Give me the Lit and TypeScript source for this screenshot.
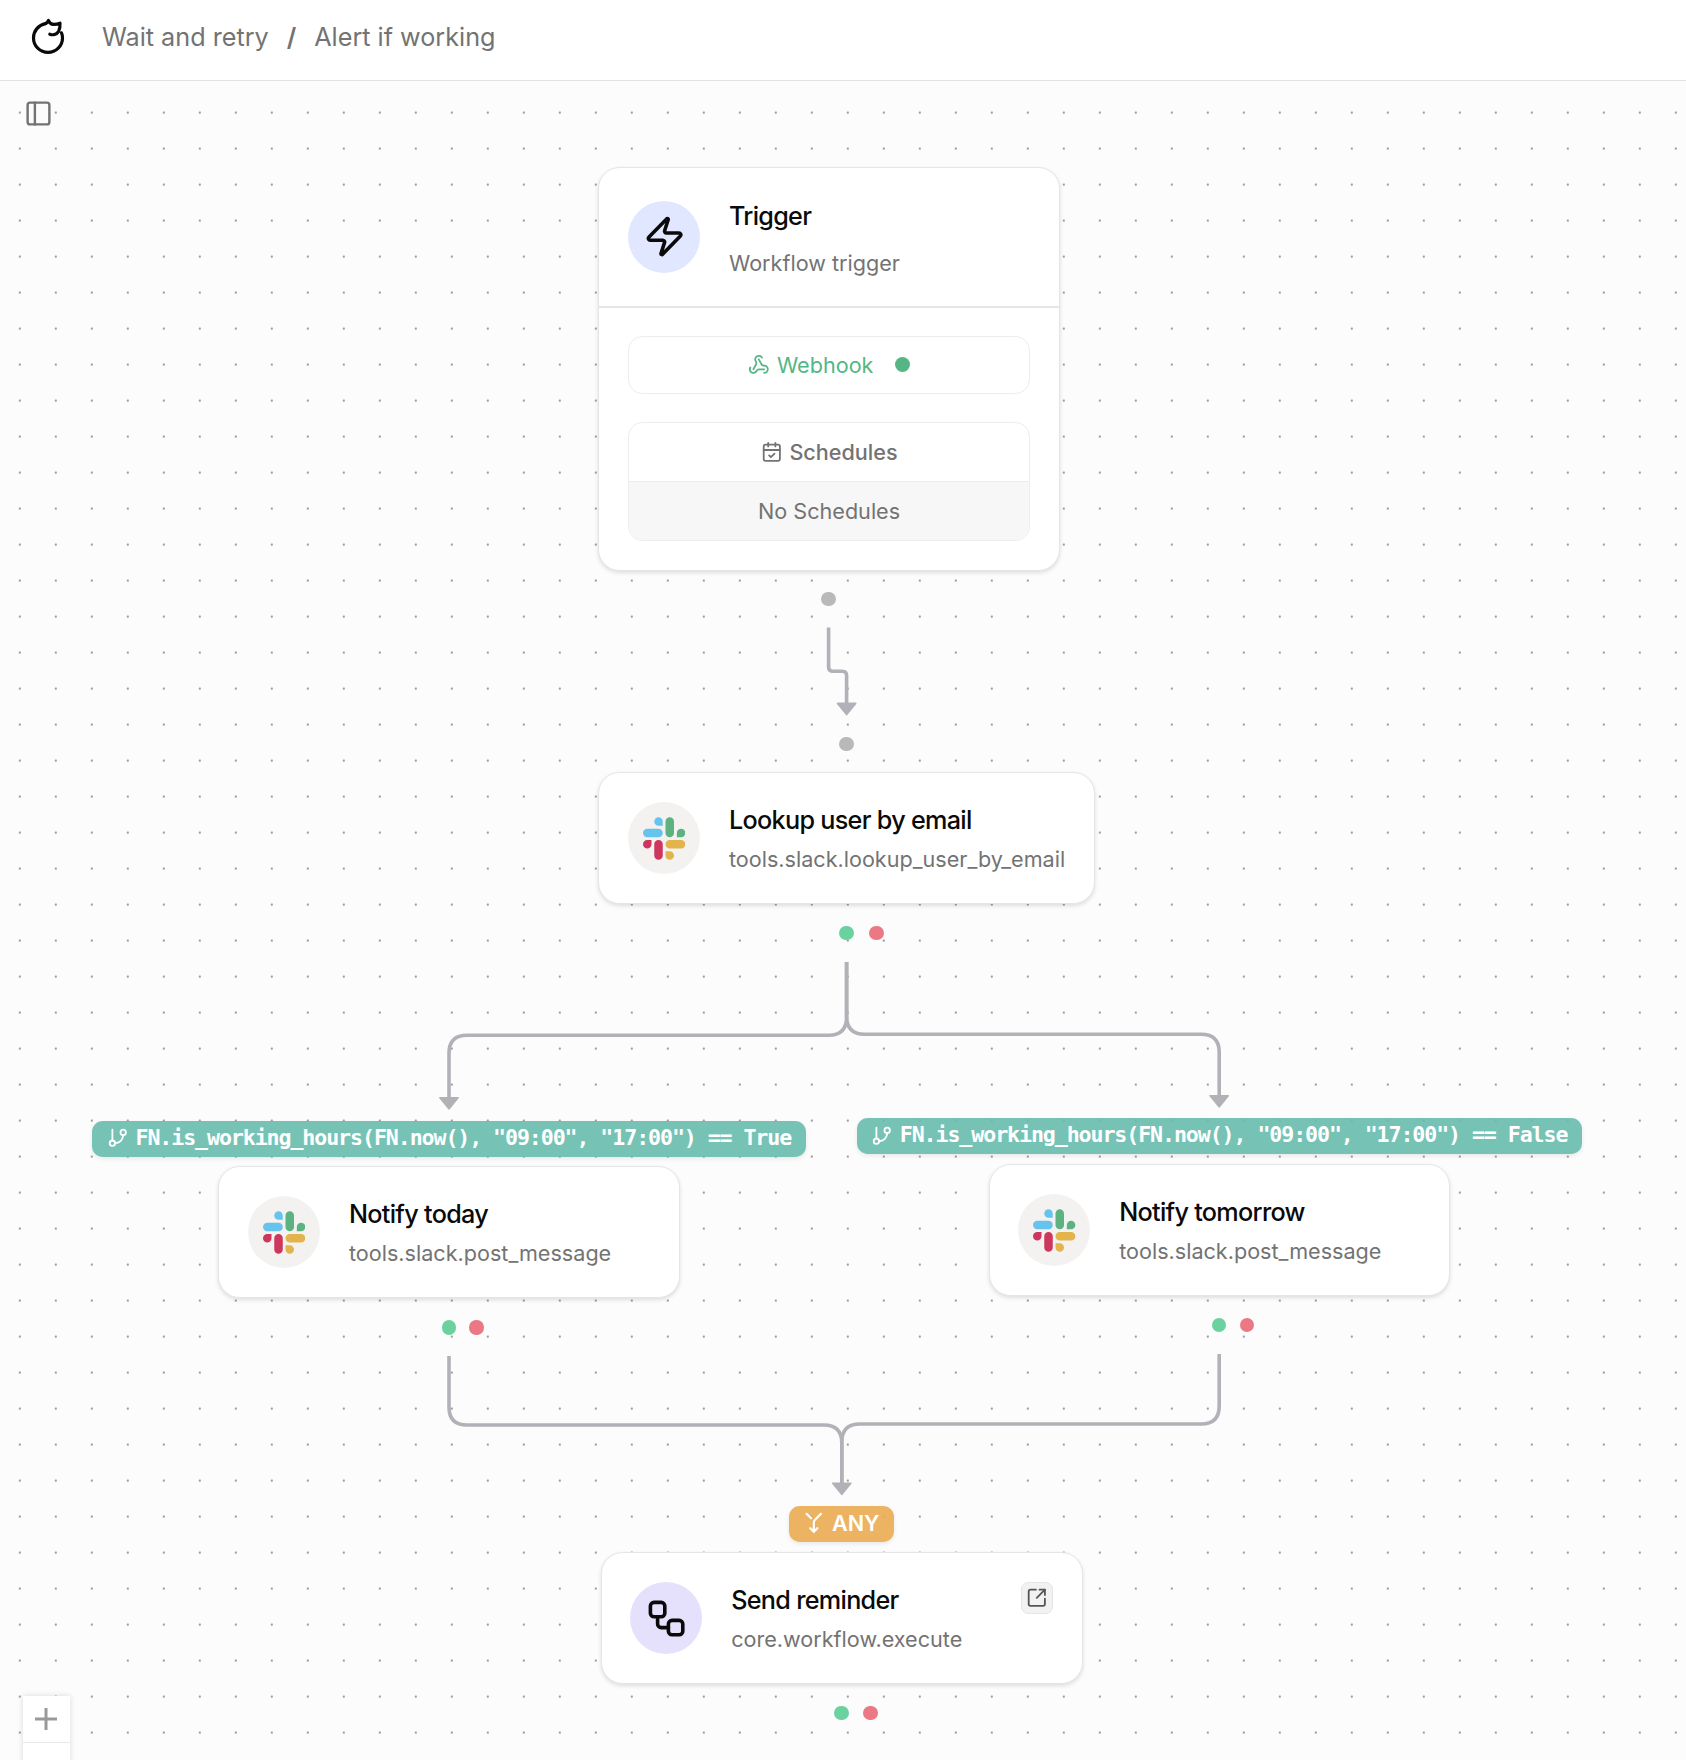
import { LitElement, html, css, svg } from "lit";
import { customElement } from "lit/decorators.js";
import { styleMap } from "lit/directives/style-map.js";

const lucide = (body: unknown, cls: string, sw = 2) => html`<svg class="ic ${cls}" viewBox="0 0 24 24" fill="none" stroke="currentColor" stroke-width=${sw} stroke-linecap="round" stroke-linejoin="round">${body}</svg>`;

const zap = svg`<path d="M4 14a1 1 0 0 1-.78-1.63l9.9-10.2a.5.5 0 0 1 .86.46l-1.92 6.02A1 1 0 0 0 13 10h7a1 1 0 0 1 .78 1.63l-9.9 10.2a.5.5 0 0 1-.86-.46l1.92-6.02A1 1 0 0 0 11 14z"/>`;
const workflow = svg`<rect width="8" height="8" x="3" y="3" rx="2"/><path d="M7 11v4a2 2 0 0 0 2 2h4"/><rect width="8" height="8" x="13" y="13" rx="2"/>`;
const webhook = svg`<path d="M18 16.98h-5.99c-1.1 0-1.95.94-2.48 1.9A4 4 0 0 1 2 17c.01-.7.2-1.4.57-2"/><path d="m6 17 3.13-5.78c.53-.97.1-2.18-.5-3.1a4 4 0 1 1 6.89-4.06"/><path d="m12 6 3.13 5.73C15.66 12.7 16.9 13 18 13a4 4 0 0 1 0 8"/>`;
const calendar = svg`<path d="M8 2v4"/><path d="M16 2v4"/><rect width="18" height="18" x="3" y="4" rx="2"/><path d="M3 10h18"/><path d="m9 16 2 2 4-4"/>`;
const branch = svg`<path d="M6 3v12"/><circle cx="18" cy="6" r="3"/><circle cx="6" cy="18" r="3"/><path d="M18 9a9 9 0 0 1-9 9"/>`;
const merge = svg`<g transform="rotate(180 12 12)"><path d="m8 6 4-4 4 4"/><path d="M12 2v10.3a4 4 0 0 1-1.172 2.872L4 22"/><path d="m20 22-5-5"/></g>`;
const panel = svg`<rect width="18" height="18" x="3" y="3" rx="2"/><path d="M9 3v18"/>`;
const openOut = svg`<path d="M11 3H5a2 2 0 0 0-2 2v14a2 2 0 0 0 2 2h14a2 2 0 0 0 2-2v-6"/><path d="M15 3h6v6"/><path d="M21 3 12 12"/>`;

const slack = html`<svg class="slack" viewBox="0 0 54 54">
<path fill="#66c3ec" d="M19.7.1a5.4 5.4 0 1 0 0 10.8h5.4V5.5A5.4 5.4 0 0 0 19.7.1m0 14.4H5.4a5.4 5.4 0 1 0 0 10.8h14.3a5.4 5.4 0 1 0 0-10.8"/>
<path fill="#5cb381" d="M53.8 19.9a5.4 5.4 0 1 0-10.8 0v5.4h5.4a5.4 5.4 0 0 0 5.4-5.4m-14.4 0V5.5a5.4 5.4 0 1 0-10.8 0v14.4a5.4 5.4 0 1 0 10.8 0"/>
<path fill="#e3b34c" d="M34 54a5.4 5.4 0 1 0 0-10.8h-5.4v5.4A5.4 5.4 0 0 0 34 54m0-14.4h14.4a5.4 5.4 0 1 0 0-10.8H34a5.4 5.4 0 1 0 0 10.8"/>
<path fill="#cd375d" d="M0 34.2a5.4 5.4 0 1 0 10.8 0v-5.4H5.4A5.4 5.4 0 0 0 0 34.2m14.3 0v14.4a5.4 5.4 0 1 0 10.8 0V34.2a5.4 5.4 0 1 0-10.8 0"/>
</svg>`;

interface Dot { x: number; y: number; kind: "idle" | "ok" | "err" }
interface Action { x: number; y: number; w: number; title: string; sub: string; icon: "slack" | "workflow" }

const dots: Dot[] = [
  { x: 828.5, y: 598.7, kind: "idle" }, { x: 846.5, y: 744, kind: "idle" },
  { x: 846.5, y: 933, kind: "ok" }, { x: 876.5, y: 933, kind: "err" },
  { x: 448.8, y: 1327.3, kind: "ok" }, { x: 476.6, y: 1327.3, kind: "err" },
  { x: 1219, y: 1325.2, kind: "ok" }, { x: 1246.9, y: 1325.2, kind: "err" },
  { x: 841.5, y: 1712.8, kind: "ok" }, { x: 870.5, y: 1712.8, kind: "err" },
];
const actions: Action[] = [
  { x: 598.4, y: 772, w: 496.2, title: "Lookup user by email", sub: "tools.slack.lookup_user_by_email", icon: "slack" },
  { x: 218.4, y: 1166, w: 461.4, title: "Notify today", sub: "tools.slack.post_message", icon: "slack" },
  { x: 988.6, y: 1164, w: 461.4, title: "Notify tomorrow", sub: "tools.slack.post_message", icon: "slack" },
  { x: 600.6, y: 1552, w: 482, title: "Send reminder", sub: "core.workflow.execute", icon: "workflow" },
];
const conditions = [
  { x: 92.3, y: 1120.6, text: 'FN.is_working_hours(FN.now(), "09:00", "17:00") == True' },
  { x: 856.6, y: 1118.4, text: 'FN.is_working_hours(FN.now(), "09:00", "17:00") == False' },
];
const edges = [
  "M828.6 627.5V667Q828.6 671.2 833 671.2H842.2Q846.6 671.2 846.6 675.6V704",
  "M846.6 962V1017.2Q846.6 1035.2 828.6 1035.2H467Q449 1035.2 449 1053.2V1098",
  "M846.6 962V1016.2Q846.6 1034.2 864.6 1034.2H1201.2Q1219.2 1034.2 1219.2 1052.2V1096",
  "M449 1356V1407Q449 1425 467 1425H823.8Q841.8 1425 841.8 1443V1484",
  "M1219.2 1354V1406Q1219.2 1424 1201.2 1424H859.8Q841.8 1424 841.8 1442V1484",
];
const arrows = [[846.6, 715.7], [449, 1110], [1219.2, 1108], [841.8, 1495.5]];

const at = (x: number, y: number, w?: number) => styleMap({ left: `${x}px`, top: `${y}px`, ...(w ? { width: `${w}px` } : {}) });

@customElement("app-root")
export class AppRoot extends LitElement {
  static styles = css`
    :host { display: block; }
    * { box-sizing: border-box; }
    .page { width: 1686px; height: 1760px; display: flex; flex-direction: column; overflow: hidden; background: #fcfcfc; font-family: Inter, "Liberation Sans", sans-serif; color: #0a0a0a; }
    .ic { display: block; flex: none; }
    .top { flex: none; height: 81px; background: #fff; border-bottom: 1px solid #e2e2e2; display: flex; align-items: center; padding: 0 0 6px 30px; }
    .logo { width: 36px; height: 40px; flex: none; }
    .crumbs { display: flex; align-items: center; margin-left: 36px; gap: 18px; font-size: 25.2px; line-height: 36px; color: #737373; white-space: nowrap; }
    .slash { font-weight: 600; }
    .canvas { flex: 1; position: relative; overflow: hidden; background-image: radial-gradient(circle at 1px 1px, #9c9c9c 0, #9c9c9c .7px, transparent 1.5px); background-size: 36px 36px; background-position: 18.8px 30.6px; }
    .layer { position: absolute; left: 0; top: -81px; width: 1686px; height: 1760px; }
    .edges { position: absolute; left: 0; top: 0; }
    .panel { position: absolute; left: 24px; top: 98.500px; width: 29px; height: 29px; color: #737373; }
    .card { position: absolute; background: #fff; border: 1px solid #e5e5e5; border-radius: 21.6px; box-shadow: 0 2px 4px rgba(0,0,0,.12); }
    .head { display: flex; gap: 28.8px; padding: 29.2px 28.8px 28.8px; align-items: flex-start; height: 130px; }
    .head.tall { height: 137.5px; padding-top: 33px; }
    .av { width: 72px; height: 72px; border-radius: 50%; flex: none; display: flex; align-items: center; justify-content: center; background: #f3f2f0; }
    .av.blue { background: #e0e7ff; }
    .av.violet { background: #e5e0fb; }
    .i43 { width: 43.2px; height: 43.2px; }
    .slack { width: 42.5px; height: 43px; display: block; }
    .words { display: flex; flex-direction: column; white-space: nowrap; flex: 1; }
    .title { font-size: 25.2px; font-weight: 500; line-height: 36px; letter-spacing: -.7px; }
    .sub { font-size: 21.6px; line-height: 28.8px; margin-top: 6.6px; color: #737373; }
    .tall .title { margin-top: -3.4px; }
    .tall .sub { margin-top: 15.4px; }
    .body { border-top: 2px solid #e5e5e5; padding: 28.8px; display: flex; flex-direction: column; gap: 28.8px; }
    .box { border: 1.8px solid #ededed; border-radius: 14.4px; font-size: 21.6px; color: #737373; overflow: hidden; }
    .line { display: flex; align-items: center; justify-content: center; height: 55.4px; gap: 7.2px; }
    .plan { height: 57.5px; }
    .hook { color: #55b685; }
    .none { background: #f7f7f7; border-top: 1.8px solid #ededed; height: 59px; }
    .medium { font-weight: 500; }
    .i21 { width: 21.6px; height: 21.6px; }
    .live { width: 15px; height: 15px; border-radius: 50%; background: #55b685; margin-left: 14.4px; }
    .dot { position: absolute; width: 14.4px; height: 14.4px; margin: -7.2px 0 0 -7.2px; border-radius: 50%; }
    .idle { background: #b9b9b9; }
    .ok { background: #6bd29f; }
    .err { background: #eb7885; }
    .cond { position: absolute; height: 36px; border-radius: 10.8px; background: rgba(103,189,174,.9); color: #fff; display: flex; align-items: center; gap: 7.2px; padding: 0 15px 1px 14.4px; font: 700 21.6px "DejaVu Sans Mono", monospace; letter-spacing: -1.08px; white-space: pre; box-shadow: 0 2px 4px rgba(0,0,0,.08); }
    .cond span { margin-top: -2px; }
    .any { position: absolute; height: 36px; width: 105.4px; border-radius: 10.8px; background: rgba(234,171,82,.9); color: #fff; display: flex; align-items: center; justify-content: center; gap: 7.2px; padding: 0 1px 1.5px 0; font-size: 21.6px; font-weight: 600; box-shadow: 0 2px 4px rgba(0,0,0,.08); }
    .go { width: 31.4px; height: 31.4px; border-radius: 7.2px; border: 1px solid #e5e5e5; background: #f2f2f2; display: flex; align-items: center; justify-content: center; color: #555; flex: none; }
    .zoom { position: absolute; left: 22.7px; top: 1696px; width: 47.3px; height: 90px; background: #fff; box-shadow: 0 0 6px rgba(0,0,0,.14); }
    .plus { height: 46.8px; border-bottom: 1.4px solid #e8e8e8; display: flex; align-items: center; justify-content: center; color: #999; }
  `;

  private avatar(icon: string) {
    return icon === "slack" ? html`<div class="av">${slack}</div>` : html`<div class="av violet">${lucide(workflow, "i43")}</div>`;
  }

  render() {
    return html`<div class="page">
      <header class="top">
        <svg class="logo" viewBox="0 0 36 40" fill="none" stroke="#0a0a0a" stroke-width="3.2" stroke-linecap="round" stroke-linejoin="round">
          <path d="M15.500 6.600C8.500 7.800 3.500 14 3.500 20.900C3.500 29 10 35.400 18 35.400S32.500 29 32.500 20.900C32.500 18.900 32.200 17.400 31.500 15.800"/>
          <path d="M15.500 6.600C17.300 6 17.900 4.800 18.500 3.400C19.300 5.800 21 7.200 23.500 7.400C26 7.500 28 7 30 6.200C30.200 9 30 12 28.500 14.600C26.600 17.600 23 18.400 19.800 17.200"/>
        </svg>
        <nav class="crumbs"><span>Wait and retry</span><span class="slash">/</span><span>Alert if working</span></nav>
      </header>
      <main class="canvas"><div class="layer">
        <svg class="edges" width="1686" height="1760" fill="none" stroke="#b1b1b7" stroke-width="3.6">
          ${edges.map((d) => svg`<path d=${d}/>`)}
          ${arrows.map(([x, y]) => svg`<path d="M${x - 9} ${y - 12.2}h18l-9 11z" fill="#b1b1b7" stroke-width="1.8" stroke-linejoin="round"/>`)}
        </svg>
        ${lucide(panel, "panel")}
        <section class="card" style=${at(598.4, 167, 461.4)}>
          <div class="head tall"><div class="av blue">${lucide(zap, "i43")}</div>
            <div class="words"><div class="title">Trigger</div><div class="sub">Workflow trigger</div></div></div>
          <div class="body">
            <div class="box"><div class="line hook">${lucide(webhook, "i21")}<span>Webhook</span><i class="live"></i></div></div>
            <div class="box"><div class="line plan medium">${lucide(calendar, "i21")}<span>Schedules</span></div><div class="line none">No Schedules</div></div>
          </div>
        </section>
        ${actions.map((a) => html`<section class="card" style=${at(a.x, a.y, a.w)}><div class="head">
          ${this.avatar(a.icon)}<div class="words"><div class="title">${a.title}</div><div class="sub">${a.sub}</div></div>
          ${a.icon === "workflow" ? html`<div class="go">${lucide(openOut, "i21", 2)}</div>` : ""}
        </div></section>`)}
        ${conditions.map((c) => html`<div class="cond" style=${at(c.x, c.y)}>${lucide(branch, "i21")}<span>${c.text}</span></div>`)}
        <div class="any" style=${at(789.1, 1506)}>${lucide(merge, "i21", 2.4)}<span>ANY</span></div>
        ${dots.map((d) => html`<i class="dot ${d.kind}" style=${at(d.x, d.y)}></i>`)}
        <div class="zoom"><div class="plus"><svg width="22" height="22" viewBox="0 0 22 22" stroke="currentColor" stroke-width="3"><path d="M11 0v22M0 11h22"/></svg></div></div>
      </div></main>
    </div>`;
  }
}
